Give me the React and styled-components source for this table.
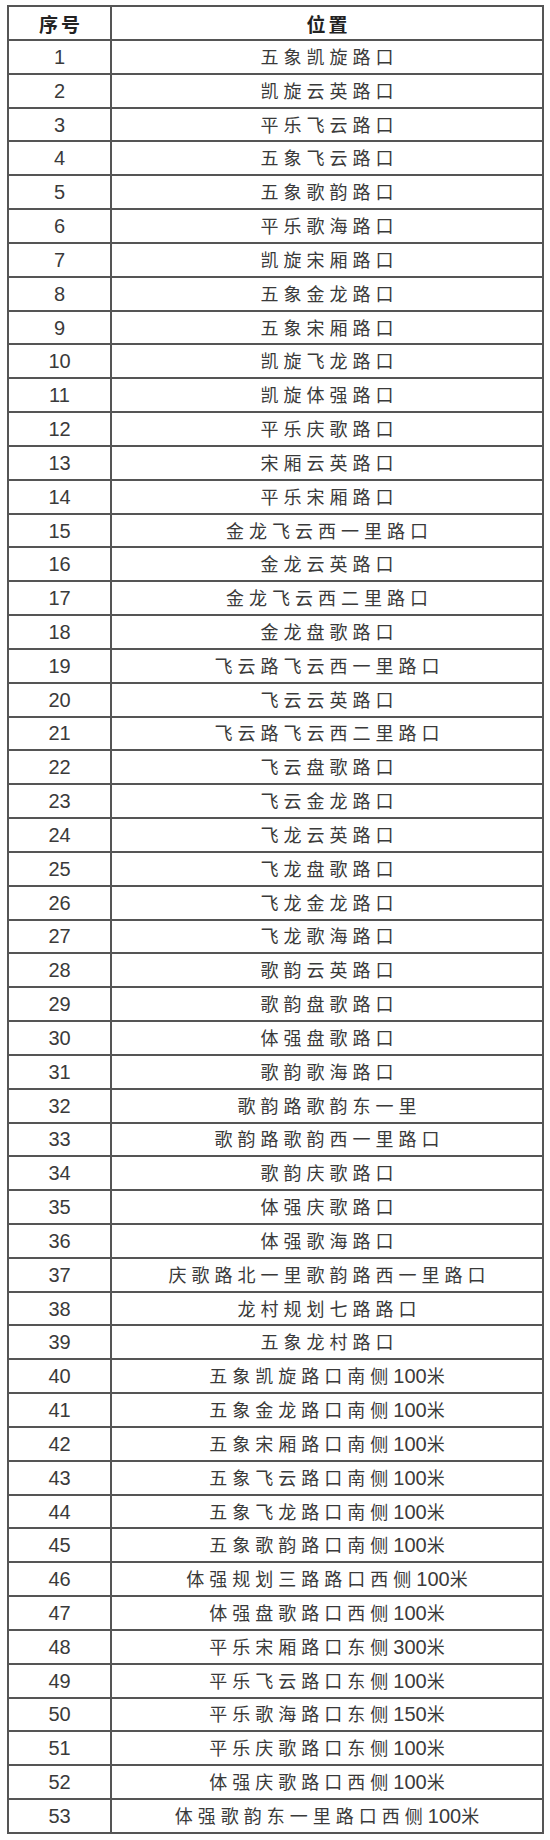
import React from 'react';
import styled, { createGlobalStyle } from 'styled-components';

const GlobalStyle = createGlobalStyle`
  html, body {
    margin: 0;
    padding: 0;
    background: #ffffff;
  }
`;

const Page = styled.div`
  padding: 5px 0 0 7px;
  width: 537px;
`;

const Table = styled.table`
  width: 537px;
  border-collapse: collapse;
  table-layout: fixed;
  color: #3a3a3a;
  border: 2px solid #555;
`;

const HeadRow = styled.tr`
  height: 34px;
`;

const Row = styled.tr`
  height: 33.83px;
`;

const HeadCell = styled.th`
  border: 2px solid #555;
  padding: 0;
  font-family: "Noto Sans CJK SC", sans-serif;
  font-weight: bold;
  font-size: 19px;
  letter-spacing: 3px;
  text-indent: 3px;
  color: #222;
  text-align: center;
  width: ${(p) => (p.$narrow ? '101px' : 'auto')};
`;

const NumCell = styled.td`
  border: 2px solid #555;
  padding: 0;
  font-family: "Liberation Sans", Arial, sans-serif;
  font-size: 20px;
  text-align: center;
  line-height: 1;
`;

const PlaceCell = styled.td`
  border: 2px solid #555;
  padding: 0;
  font-family: "Liberation Sans", Arial, sans-serif;
  font-size: 20px;
  text-align: center;
  line-height: 1;
  white-space: nowrap;
`;

const Cjk = styled.span`
  font-family: "Noto Sans CJK SC", sans-serif;
  font-size: 18px;
  letter-spacing: 5px;
`;

const places = [
  '五象凯旋路口', '凯旋云英路口', '平乐飞云路口', '五象飞云路口', '五象歌韵路口',
  '平乐歌海路口', '凯旋宋厢路口', '五象金龙路口', '五象宋厢路口', '凯旋飞龙路口',
  '凯旋体强路口', '平乐庆歌路口', '宋厢云英路口', '平乐宋厢路口', '金龙飞云西一里路口',
  '金龙云英路口', '金龙飞云西二里路口', '金龙盘歌路口', '飞云路飞云西一里路口', '飞云云英路口',
  '飞云路飞云西二里路口', '飞云盘歌路口', '飞云金龙路口', '飞龙云英路口', '飞龙盘歌路口',
  '飞龙金龙路口', '飞龙歌海路口', '歌韵云英路口', '歌韵盘歌路口', '体强盘歌路口',
  '歌韵歌海路口', '歌韵路歌韵东一里', '歌韵路歌韵西一里路口', '歌韵庆歌路口', '体强庆歌路口',
  '体强歌海路口', '庆歌路北一里歌韵路西一里路口', '龙村规划七路路口', '五象龙村路口',
  '五象凯旋路口南侧100米', '五象金龙路口南侧100米', '五象宋厢路口南侧100米',
  '五象飞云路口南侧100米', '五象飞龙路口南侧100米', '五象歌韵路口南侧100米',
  '体强规划三路路口西侧100米', '体强盘歌路口西侧100米', '平乐宋厢路口东侧300米',
  '平乐飞云路口东侧100米', '平乐歌海路口东侧150米', '平乐庆歌路口东侧100米',
  '体强庆歌路口西侧100米', '体强歌韵东一里路口西侧100米',
];

// split into CJK runs (spaced out) and digit runs (tight)
const Place = ({ text }) => {
  const parts = text.split(/(\d+)/).filter(Boolean);
  const last = parts.length - 1;
  return parts.map((part, i) =>
    /\d/.test(part) ? (
      <span key={i}>{part}</span>
    ) : (
      <Cjk key={i} style={i === last ? { marginRight: '-5px' } : undefined}>
        {part}
      </Cjk>
    )
  );
};

const App = () => {
  return (
    <Page>
      <GlobalStyle />
      <Table>
        <thead>
          <HeadRow>
            <HeadCell $narrow>序号</HeadCell>
            <HeadCell>位置</HeadCell>
          </HeadRow>
        </thead>
        <tbody>
          {places.map((p, i) => (
            <Row key={i}>
              <NumCell>{i + 1}</NumCell>
              <PlaceCell>
                <Place text={p} />
              </PlaceCell>
            </Row>
          ))}
        </tbody>
      </Table>
    </Page>
  );
};

export default App;
